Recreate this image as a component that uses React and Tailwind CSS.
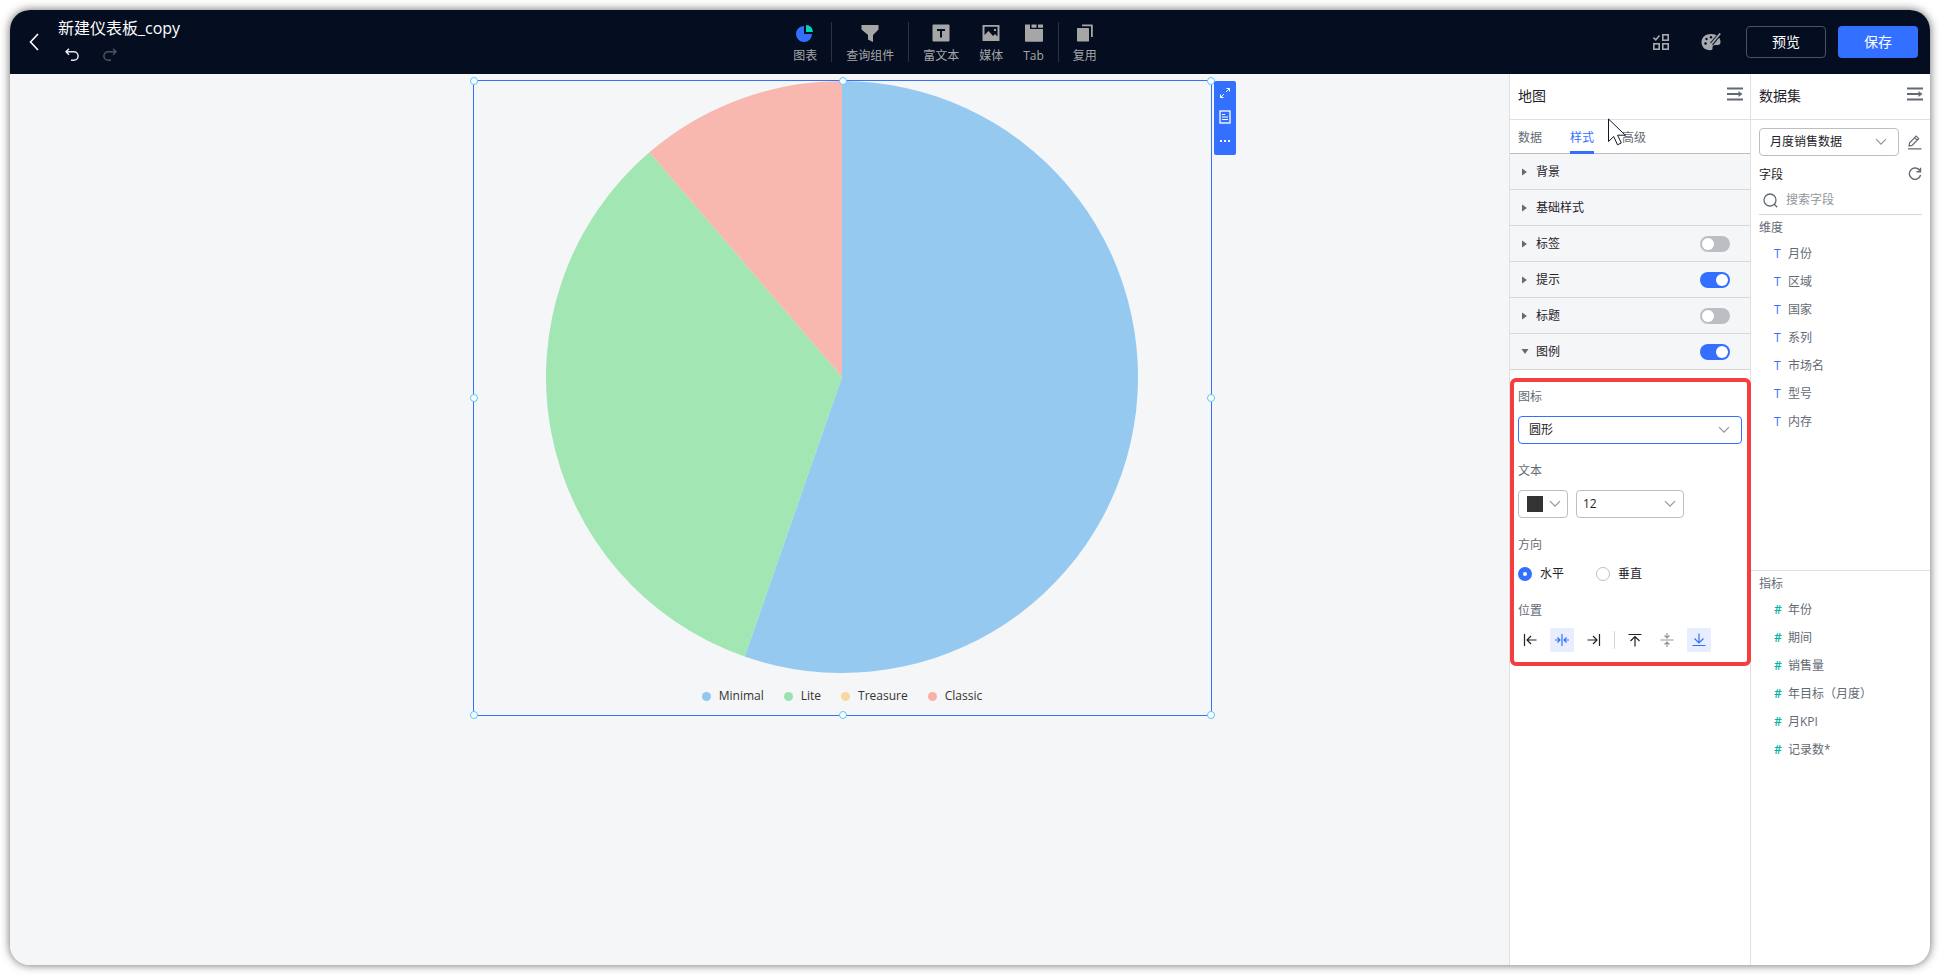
import { useState } from 'react';

const SLICES = [
  { name: 'Minimal', color: '#96c9f0', dot: 'bg-[#8fc8f0]', from: 0, to: 199.2 },
  { name: 'Lite', color: '#a2e6b4', dot: 'bg-[#9be3ae]', from: 199.2, to: 319.4 },
  { name: 'Treasure', color: '#f8d8a2', dot: 'bg-[#f8d7a0]', from: 319.4, to: 319.4 },
  { name: 'Classic', color: '#f8b7af', dot: 'bg-[#f8b0a8]', from: 319.4, to: 360 },
];

const DIMENSIONS = ['月份', '区域', '国家', '系列', '市场名', '型号', '内存'];
const METRICS = ['年份', '期间', '销售量', '年目标（月度）', '月KPI', '记录数*'];

function slicePath({ from, to }, r) {
  const point = (deg) => {
    const rad = (deg * Math.PI) / 180;
    return `${r + r * Math.sin(rad)} ${r - r * Math.cos(rad)}`;
  };
  return `M${r} ${r} L${point(from)} A${r} ${r} 0 ${to - from > 180 ? 1 : 0} 1 ${point(to)} Z`;
}

function Chevron({ className = '' }) {
  return (
    <svg className={`pointer-events-none ${className}`} width="12" height="8" viewBox="0 0 12 8" fill="none" stroke="#8f959e" strokeWidth="1.2">
      <path d="M1 1.2l5 5 5-5" />
    </svg>
  );
}

function CollapseIcon() {
  return (
    <svg width="16" height="14" viewBox="0 0 16 14" fill="#646a73">
      <rect y="0.5" width="16" height="2" />
      <rect y="6" width="14" height="2" />
      <path d="M11.500 4l4 3-4 3z" />
      <rect y="11.5" width="16" height="2" />
    </svg>
  );
}

// Toolbar entries, grouped by the dividers between them
const TOOLS = [
  [
    {
      label: '图表',
      icon: (
        <>
          <path d="M8 2a8 8 0 1 0 8 8H8z" fill="#3370ff" />
          <path d="M10 1h0a7 7 0 0 1 7 7h-7z" fill="#00d6b9" />
        </>
      ),
    },
  ],
  [{ label: '查询组件', icon: <path d="M.5 1h17v4.500L12 11v7l-5-2.500V11L.5 5.500z" /> }],
  [
    {
      label: '富文本',
      icon: <path fillRule="evenodd" d="M1.500.5h15a1 1 0 0 1 1 1v15a1 1 0 0 1-1 1h-15a1 1 0 0 1-1-1v-15a1 1 0 0 1 1-1zM5 5v2h3v6.500h2V7h3V5z" />,
    },
    {
      label: '媒体',
      icon: (
        <path
          fillRule="evenodd"
          d="M1 1h16a.5.5 0 0 1 .5.5v15a.5.5 0 0 1-.5.5H1a.5.5 0 0 1-.5-.5v-15A.5.5 0 0 1 1 1zm1.500 1.700v8.300L6.500 7l4.500 5 2-2 2.500 2.500V2.700zM12 5h2v2h-2z"
        />
      ),
    },
    { label: 'Tab', icon: <path d="M0 .5h5V5h13v12a.8.8 0 0 1-.8.8H.8A.8.8 0 0 1 0 17zM6.500.5h5v3.200h-5zM13 .5h5v3.200h-5z" /> },
  ],
  [
    {
      label: '复用',
      icon: (
        <>
          <rect x="1" y="4" width="12" height="13.500" rx="0.8" />
          <path d="M6 .5h10a.8.8 0 0 1 .8.8V13h-1.800V2.300H6z" />
        </>
      ),
    },
  ],
];

function Header() {
  return (
    <header className="flex h-16 shrink-0 items-center bg-[#050e21]">
      <div className="flex flex-1 items-center pl-4">
        <button aria-label="返回" className="flex w-4 justify-center">
          <svg width="10" height="18" viewBox="0 0 10 18" fill="none" stroke="#fff" strokeWidth="1.600">
            <path d="M9 1L1.500 9 9 17" />
          </svg>
        </button>
        <div className="flex flex-col gap-2 pb-1.5 pl-4">
          <h1 className="text-base leading-6 text-white">新建仪表板_copy</h1>
          <div className="flex gap-6 pl-[7px]">
            <button aria-label="撤销">
              <svg width="14" height="14" viewBox="0 0 14 14" fill="none" stroke="#e6e8eb" strokeWidth="1.500">
                <path d="M4 .7L1 3.700l3 3M1 3.700h7.800a4.200 4.200 0 0 1 0 8.600H6" />
              </svg>
            </button>
            <button aria-label="重做">
              <svg width="14" height="14" viewBox="0 0 14 14" fill="none" stroke="#4e535c" strokeWidth="1.500">
                <path d="M10 .7l3 3-3 3M13 3.700H5.200a4.200 4.200 0 0 0 0 8.600H8" />
              </svg>
            </button>
          </div>
        </div>
      </div>

      <nav className="mr-[54px] flex h-10 divide-x divide-[#2b3240]">
        {TOOLS.map((group) => (
          <div key={group[0].label} className="flex gap-5 px-3.5">
            {group.map((tool) => (
              <button key={tool.label} className="flex flex-col items-center gap-1.5 pt-0.5 text-xs leading-4 text-[#a6a6a6]">
                <svg className="shrink-0" width="18" height="18" viewBox="0 0 18 18" fill="#a6a6a6">
                  {tool.icon}
                </svg>
                {tool.label}
              </button>
            ))}
          </div>
        ))}
      </nav>

      <div className="flex flex-1 items-center justify-end pr-3">
        <button aria-label="批量操作" className="mr-8">
          <svg width="16" height="16" viewBox="0 0 16 16" fill="none" stroke="#a6a9ae" strokeWidth="1.600">
            <path d="M.5 3.500L2.800 5.800 6.500 1.500" />
            <rect x="9.800" y="0.8" width="5.400" height="5.400" />
            <rect x="0.8" y="9.800" width="5.400" height="5.400" />
            <rect x="9.800" y="9.800" width="5.400" height="5.400" />
          </svg>
        </button>
        <button aria-label="仪表板配置" className="mr-[25px]">
          <svg width="20" height="18" viewBox="0 0 20 18">
            <path d="M10 1C4.500 1 .5 4.500.5 9.300c0 4.400 3.500 8 8.500 8 2 0 2.700-1 2.500-2.300-.2-1.800.8-3 2.800-3h2.400c2 0 2.800-1.200 2.800-3C19.500 4.200 15.500 1 10 1z" fill="#a6a9ae" />
            <g fill="#050e21">
              <circle cx="4.500" cy="10.500" r="1.300" />
              <circle cx="5.500" cy="6" r="1.200" />
              <circle cx="10" cy="4.200" r="1.200" />
            </g>
            <path d="M19 1l-8.500 10" stroke="#050e21" strokeWidth="3.600" />
            <path d="M19.200.5L10 11.500" stroke="#a6a9ae" strokeWidth="1.800" />
          </svg>
        </button>
        <div className="flex gap-3">
          <button className="h-8 w-20 rounded border border-[#4b5363] text-sm text-white">预览</button>
          <button className="h-8 w-20 rounded bg-[#3370ff] text-sm text-white">保存</button>
        </div>
      </div>
    </header>
  );
}

function Handle({ className }) {
  return <span className={`absolute size-2 rounded-full border border-[#59c7f9] bg-white ${className}`} />;
}

function Canvas() {
  return (
    <main className="relative flex-1 bg-[#f5f6f8]">
      <section className="absolute top-1.5 left-[463px] w-[739px] border border-[#3370ff] pr-px">
        <svg className="mx-auto block" width="592" height="592" viewBox="0 0 592 592">
          {SLICES.map((slice) => (
            <path key={slice.name} d={slicePath(slice, 296)} fill={slice.color} />
          ))}
        </svg>
        <ul className="flex h-[42px] items-center justify-center gap-5 pt-1 text-xs text-[#333]">
          {SLICES.map((slice) => (
            <li key={slice.name} className="flex items-center gap-2">
              <span className={`size-[9px] rounded-full ${slice.dot}`} />
              {slice.name}
            </li>
          ))}
        </ul>

        <Handle className="-top-1 -left-1" />
        <Handle className="-top-1 left-1/2 -translate-x-1/2" />
        <Handle className="-top-1 -right-1" />
        <Handle className="top-1/2 -left-1 -translate-y-1/2" />
        <Handle className="top-1/2 -right-1 -translate-y-1/2" />
        <Handle className="-bottom-1 -left-1" />
        <Handle className="-bottom-1 left-1/2 -translate-x-1/2" />
        <Handle className="-right-1 -bottom-1" />

        <div className="absolute top-0 left-full ml-[3px] flex h-[74px] w-[22px] flex-col items-center justify-around rounded-xs bg-[#3370ff] pb-0.5">
          <button aria-label="放大">
            <svg width="12" height="12" viewBox="0 0 12 12" fill="none" stroke="#fff">
              <path d="M7.500 1.500h3v3M10.500 1.500L7 5M4.500 10.500h-3v-3M1.500 10.500L5 7" />
            </svg>
          </button>
          <button aria-label="查看数据">
            <svg width="12" height="14" viewBox="0 0 12 14" fill="none" stroke="#fff">
              <rect x="1" y="1" width="10" height="12" strokeWidth="1.300" />
              <path d="M3 4.500h3M3 7h6M3 9.500h6" />
            </svg>
          </button>
          <button aria-label="更多">
            <svg width="12" height="12" viewBox="0 0 12 12" fill="#fff">
              <path d="M1 5h2v2H1zM5 5h2v2H5zM9 5h2v2H9z" />
            </svg>
          </button>
        </div>
      </section>
    </main>
  );
}

function Toggle({ label, defaultChecked }) {
  return (
    <input
      type="checkbox"
      role="switch"
      aria-label={label}
      defaultChecked={defaultChecked}
      className="h-4 w-[30px] appearance-none rounded-full bg-[#bbbfc4] p-0.5 before:block before:size-3 before:rounded-full before:bg-white checked:bg-[#3370ff] checked:before:ml-3.5"
    />
  );
}

function SectionRow({ title, open, toggle }) {
  return (
    <div className="flex h-9 items-center border-b border-[#d5d7db] bg-[#f5f6f8] pr-5 pl-3">
      <button className="flex flex-1 items-center gap-2 text-left text-[#1f2329]" aria-expanded={!!open}>
        <svg className={open ? 'rotate-90' : ''} width="6" height="8" viewBox="0 0 6 8" fill="#646a73">
          <path d="M0 .5L5 4 0 7.500z" />
        </svg>
        {title}
      </button>
      {toggle !== undefined && <Toggle label={title} defaultChecked={toggle} />}
    </div>
  );
}

const POSITIONS = [
  [
    { label: '左对齐', d: 'M1.500 1v12M13.500 7H4M8 3L4 7l4 4' },
    { label: '水平居中', d: 'M7 1v12M0 7h5M2.500 4.500L5 7 2.500 9.500M14 7H9M11.500 4.500L9 7l2.500 2.500', active: true },
    { label: '右对齐', d: 'M12.500 1v12M.5 7H10M6 3l4 4-4 4' },
  ],
  [
    { label: '顶部对齐', d: 'M.5 1.500h13M7 13.500V4M2.500 8L7 3.500 11.500 8' },
    { label: '垂直居中', d: 'M.5 7h13M7 0v4.500M4.500 2.500L7 5l2.500-2.500M7 14V9.500M4.500 11.500L7 9l2.500 2.500', muted: true },
    { label: '底部对齐', d: 'M.5 12.500h13M7 .5V10M2.500 5.500L7 10l4.500-4.500', active: true },
  ],
];

function PositionButton({ item }) {
  const tone = item.active ? 'rounded-xs bg-[#e8eeff] text-[#3370ff]' : item.muted ? 'text-[#8f959e]' : 'text-[#1f2329]';
  return (
    <button aria-label={item.label} className={`flex size-6 items-center justify-center ${tone}`}>
      <svg width="14" height="14" viewBox="0 0 14 14" fill="none" stroke="currentColor" strokeWidth="1.200">
        <path d={item.d} />
      </svg>
    </button>
  );
}

function LegendSettings() {
  const [direction, setDirection] = useState('水平');

  return (
    <div className="mt-2 -mr-px rounded-md border-4 border-[#f53f3f] px-1 pt-1 pb-2.5 text-[#646a73]">
      <label htmlFor="legend-icon" className="block leading-[22px]">图标</label>
      <div className="relative mt-2 mr-px">
        <select id="legend-icon" className="block h-7 w-full appearance-none rounded border border-[#3370ff] bg-white px-2.5 text-[#1f2329]">
          <option>圆形</option>
        </select>
        <Chevron className="absolute top-2.5 right-3" />
      </div>

      <label htmlFor="legend-size" className="mt-4 block leading-[22px]">文本</label>
      <div className="mt-2 flex gap-2">
        <button aria-label="文本颜色" className="flex h-7 items-center gap-1.5 rounded border border-[#bbbfc4] pr-1.5 pl-2">
          <span className="size-4 bg-[#333]" />
          <Chevron />
        </button>
        <div className="relative w-[108px]">
          <select id="legend-size" className="block h-7 w-full appearance-none rounded border border-[#bbbfc4] bg-white px-1.5 text-[#1f2329]">
            <option>12</option>
          </select>
          <Chevron className="absolute top-2.5 right-2" />
        </div>
      </div>

      <p className="mt-4 leading-[22px]">方向</p>
      <div className="mt-2 flex gap-8 leading-5 text-[#1f2329]">
        {['水平', '垂直'].map((name) => (
          <label key={name} className="flex items-center gap-2">
            <input
              type="radio"
              name="direction"
              checked={direction === name}
              onChange={() => setDirection(name)}
              className="size-3.5 appearance-none rounded-full border border-[#bbbfc4] bg-white checked:border-5 checked:border-[#3370ff]"
            />
            {name}
          </label>
        ))}
      </div>

      <p className="mt-4 leading-[22px]">位置</p>
      <div className="mt-1.5 flex items-center gap-2">
        {POSITIONS[0].map((item) => (
          <PositionButton key={item.label} item={item} />
        ))}
        <span className="h-[18px] w-px bg-[#d5d7db]" />
        {POSITIONS[1].map((item) => (
          <PositionButton key={item.label} item={item} />
        ))}
      </div>
    </div>
  );
}

function PanelTitle({ children }) {
  return (
    <div className="flex h-[46px] items-center justify-between border-b border-[#dee0e3] px-2 pb-1.5">
      <h2 className="pt-1 text-sm text-[#1f2329]">{children}</h2>
      <button aria-label="收起" className="-mr-px">
        <CollapseIcon />
      </button>
    </div>
  );
}

function StylePanel() {
  return (
    <aside className="relative w-[241px] shrink-0 border-l border-[#dee0e3] text-xs">
      <PanelTitle>地图</PanelTitle>
      <div className="flex h-[34px] gap-7 border-b border-[#bbbfc4] px-2 text-[#646a73]">
        <button className="pt-0.5">数据</button>
        <button className="-mb-px border-b-3 border-[#3370ff] pt-1 text-[#3370ff]">样式</button>
        <button className="pt-0.5">高级</button>
      </div>
      <SectionRow title="背景" />
      <SectionRow title="基础样式" />
      <SectionRow title="标签" toggle={false} />
      <SectionRow title="提示" toggle={true} />
      <SectionRow title="标题" toggle={false} />
      <SectionRow title="图例" open toggle={true} />
      <LegendSettings />

      {/* mouse pointer over the tabs */}
      <svg className="pointer-events-none absolute top-11 left-[98px]" width="20" height="30" viewBox="0 0 20 30" fill="#fff" stroke="#111827">
        <path d="M.5 1v22.500l5.200-5 3.800 8.300 3.800-1.800-3.700-7.800h7.700z" />
      </svg>
    </aside>
  );
}

function FieldList({ title, mark, markClass, fields }) {
  return (
    <>
      <h3 className="px-2 leading-[25px]">{title}</h3>
      <ul>
        {fields.map((field) => (
          <li key={field} className="flex h-7 items-center pl-[23px]">
            <span className={`w-3.5 ${markClass}`}>{mark}</span>
            {field}
          </li>
        ))}
      </ul>
    </>
  );
}

function DatasetPanel() {
  return (
    <aside className="flex w-[180px] shrink-0 flex-col border-l border-[#dee0e3] text-xs text-[#646a73]">
      <PanelTitle>数据集</PanelTitle>
      <div className="flex items-center gap-2 px-2 pt-2">
        <div className="relative flex-1">
          <select aria-label="数据集" className="block h-7 w-full appearance-none rounded border border-[#bbbfc4] bg-white px-2.5 text-[#1f2329]">
            <option>月度销售数据</option>
          </select>
          <Chevron className="absolute top-2.5 right-3" />
        </div>
        <button aria-label="编辑数据集">
          <svg width="15" height="15" viewBox="0 0 15 15" fill="none" stroke="#646a73" strokeWidth="1.200">
            <path d="M2 11l.6-3.200 6.600-6.600 2.500 2.500L5 10.400zM7.700 2.800l2.500 2.500" />
            <path d="M1 13.800h13.500" strokeWidth="1.300" />
          </svg>
        </button>
      </div>
      <div className="flex h-9 items-center justify-between px-2">
        <h3 className="pt-0.5 text-[#1f2329]">字段</h3>
        <button aria-label="刷新">
          <svg width="14" height="14" viewBox="0 0 14 14" fill="none" stroke="#646a73" strokeWidth="1.400">
            <path d="M12 3.800A5.700 5.700 0 1 0 12.600 8M12.500.8v4H8.500" />
          </svg>
        </button>
      </div>
      <label className="mx-2 flex h-[23px] items-center gap-2 border-b border-[#d5d7db] pb-1.5 pl-1">
        <svg className="shrink-0" width="15" height="15" viewBox="0 0 15 15" fill="none" stroke="#646a73" strokeWidth="1.300">
          <circle cx="7" cy="7" r="6" />
          <path d="M11 11l3.200 3.200" />
        </svg>
        <input type="text" placeholder="搜索字段" className="w-full min-w-0 outline-none placeholder:text-[#8f959e]" />
      </label>
      <div className="flex-9 border-b border-[#dee0e3]">
        <FieldList title="维度" mark="T" markClass="text-[#3370ff]" fields={DIMENSIONS} />
      </div>
      <div className="flex-10">
        <FieldList title="指标" mark="#" markClass="text-[#04b49c] font-semibold" fields={METRICS} />
      </div>
    </aside>
  );
}

export default function App() {
  return (
    <div className="flex min-h-screen flex-col bg-white p-2.5 font-['Open_Sans','Noto_Sans_CJK_SC',sans-serif]">
      <div className="flex flex-1 flex-col overflow-hidden rounded-[20px] bg-white shadow-[0_0_10px_rgba(0,0,0,0.6)]">
        <Header />
        <div className="flex flex-1">
          <Canvas />
          <StylePanel />
          <DatasetPanel />
        </div>
      </div>
    </div>
  );
}
